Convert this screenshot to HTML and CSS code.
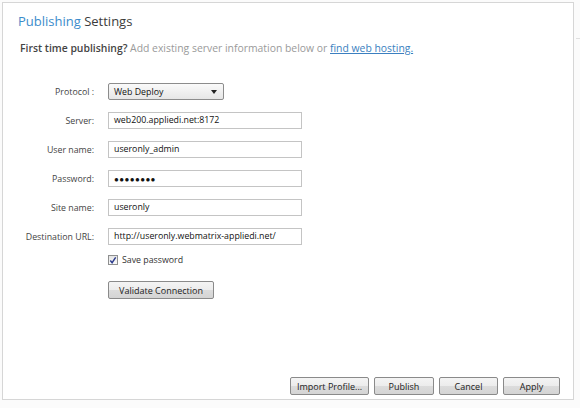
FILE: index.html
```html
<!DOCTYPE html>
<html>
<head>
<meta charset="utf-8">
<link rel="stylesheet" href="styles.css">
</head>
<body>
<div class="edge"></div>
<div class="dialog">
  <h1 class="title"><span class="accent">Publishing</span> Settings</h1>
  <p class="intro"><b>First time publishing?</b> Add existing server information below or <a href="#">find web hosting.</a></p>
  <div class="form">
    <label class="lbl">Protocol :</label>
    <div class="select"><span>Web Deploy</span><svg width="6" height="4" viewBox="0 0 6 4"><path d="M0 0h6L3 4z" fill="#222"/></svg></div>
    <label class="lbl">Server:</label>
    <div class="field">web200.appliedi.net:8172</div>
    <label class="lbl">User name:</label>
    <div class="field">useronly_admin</div>
    <label class="lbl">Password:</label>
    <div class="field dots">●●●●●●●●</div>
    <label class="lbl">Site name:</label>
    <div class="field">useronly</div>
    <label class="lbl">Destination URL:</label>
    <div class="field">http://useronly.webmatrix-appliedi.net/</div>
    <span></span>
    <div class="check"><span class="box"><svg width="9" height="9" viewBox="0 0 9 9"><path d="M1.5 4.5l2 2.5 4-6" stroke="#2a3a8c" stroke-width="1.6" fill="none"/></svg></span>Save password</div>
    <span></span>
    <div><button class="btn validate">Validate Connection</button></div>
  </div>
  <div class="footer">
    <button class="btn import">Import Profile...</button>
    <button class="btn publish">Publish</button>
    <button class="btn cancel">Cancel</button>
    <button class="btn apply">Apply</button>
  </div>
</div>
</body>
</html>
```
FILE: styles.css
```css
html, body {
  margin: 0;
  padding: 0;
  background: #fbfbfb;
  width: 580px;
  height: 408px;
  overflow: hidden;
  font-family: "Open Sans", "Noto Sans", sans-serif;
  color: #222;
}
.edge {
  position: absolute;
  left: 576px;
  top: 38px;
  width: 4px;
  height: 1px;
  background: #e0e0e0;
}
.dialog {
  margin: 2px 0 0 2px;
  width: 572px;
  height: 398px;
  box-sizing: border-box;
  border: 1px solid #d6d6d6;
  background: #fff;
  padding: 8px 0 0 15px;
  display: flex;
  flex-direction: column;
}
.title {
  margin: 0;
  font-size: 13px;
  font-weight: normal;
  line-height: 20px;
  color: #3c3c3c;
}
.accent { color: #3b8ccb; }
.intro {
  margin: 10px 0 0 2px;
  font-size: 10.4px;
  line-height: 14px;
  color: #9a9a9a;
}
.intro b { color: #444; font-weight: 600; }
.intro a { color: #3b7fc0; text-decoration: underline; }
.form {
  margin-top: 28px;
  display: grid;
  grid-template-columns: 79px 194px;
  column-gap: 11px;
  row-gap: 12px;
  align-items: center;
  font-size: 8.8px;
}
.lbl {
  text-align: right;
  color: #444;
  white-space: nowrap;
  padding-right: 3px;
}
.select {
  width: 116px;
  height: 17px;
  box-sizing: border-box;
  border: 1px solid #8c8c8c;
  border-radius: 2px;
  background: linear-gradient(#fafafa, #e6e6e6);
  display: flex;
  align-items: center;
  justify-content: space-between;
  padding: 0 6px 0 5px;
  color: #111;
}
.field {
  height: 17px;
  box-sizing: border-box;
  border: 1px solid #c4c4c4;
  background: #fff;
  padding: 0 5px;
  line-height: 15px;
  color: #111;
}
.dots { font-size: 8px; letter-spacing: 0.4px; }
.check {
  display: flex;
  align-items: center;
  gap: 4px;
  color: #333;
  margin-top: -3px;
}
.box {
  width: 10px;
  height: 10px;
  box-sizing: border-box;
  border: 1px solid #8e8f8f;
  background: linear-gradient(#e4e4e4, #fafafa);
  display: flex;
  align-items: center;
  justify-content: center;
}
.btn {
  font-family: inherit;
  font-size: 9px;
  color: #222;
  height: 18px;
  box-sizing: border-box;
  border: 1px solid #8a8a8a;
  border-radius: 2px;
  background: linear-gradient(#f4f4f4 0%, #ececec 50%, #dcdcdc 51%, #d4d4d4 100%);
  padding: 0;
  line-height: 15px;
}
.validate { width: 106px; margin-top: 3px; }
.footer {
  margin-top: auto;
  margin-bottom: 4px;
  display: flex;
  padding-left: 272px;
}
.import { width: 79px; }
.publish { width: 60px; margin-left: 5px; }
.cancel { width: 59px; margin-left: 5px; }
.apply { width: 57px; margin-left: 5px; }
```
